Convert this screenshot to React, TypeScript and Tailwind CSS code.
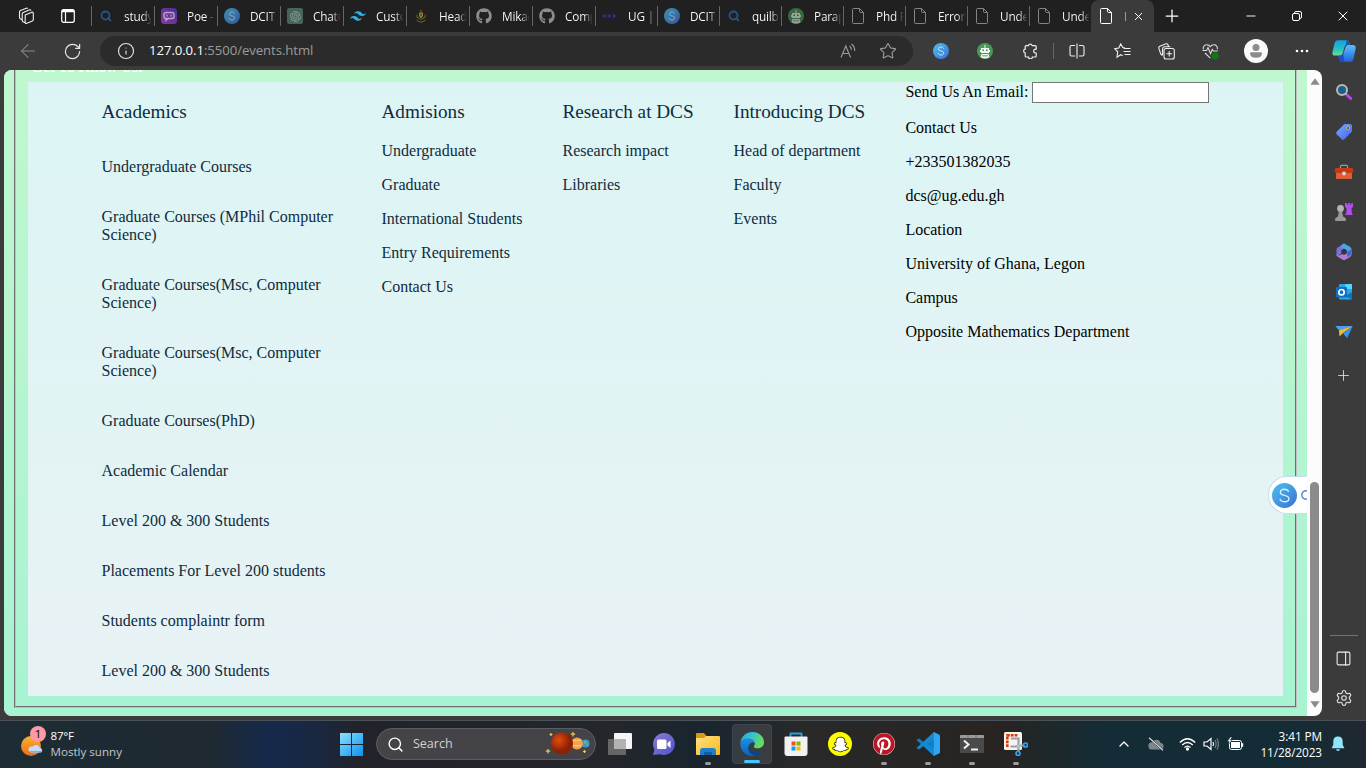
import type { ReactNode } from "react";
import {
  ArrowLeft, RotateCw, Info, Star, X, Plus, Minus, Search,
  Settings, PanelRight, ChevronUp,
} from "lucide-react";
import { FaGithub, FaPinterest, FaSnapchatGhost } from "react-icons/fa";
import { SiTailwindcss } from "react-icons/si";
import { RiOpenaiFill } from "react-icons/ri";

type Kind = "search" | "poe" | "s" | "gpt" | "tw" | "crest" | "gh" | "ug" | "bot" | "file";

const tabs: { kind: Kind; text: string }[] = [
  { kind: "search", text: "study" },
  { kind: "poe", text: "Poe - " },
  { kind: "s", text: "DCIT" },
  { kind: "gpt", text: "ChatG" },
  { kind: "tw", text: "Custo" },
  { kind: "crest", text: "Head" },
  { kind: "gh", text: "Mikae" },
  { kind: "gh", text: "Comp" },
  { kind: "ug", text: "UG |" },
  { kind: "s", text: "DCIT" },
  { kind: "search", text: "quilb" },
  { kind: "bot", text: "Parap" },
  { kind: "file", text: "Phd P" },
  { kind: "file", text: "Error" },
  { kind: "file", text: "Unde" },
  { kind: "file", text: "Unde" },
];

function Page({ className }: { className: string }) {
  return (
    <svg viewBox="0 0 12 16" width="12" height="16" fill="none" stroke="currentColor" className={className}>
      <path d="M1.500.5h6l4 4v10a1 1 0 0 1-1 1h-9a1 1 0 0 1-1-1v-13a1 1 0 0 1 1-1zM7.500.5v3a1 1 0 0 0 1 1h3" />
    </svg>
  );
}

function SBadge({ size }: { size: number }) {
  return (
    <svg viewBox="0 0 24 24" width={size} height={size} className="shrink-0">
      <defs>
        <linearGradient id="sb" x1="0" y1="0" x2="1" y2="1">
          <stop offset="0" stopColor="#4cc3ea" />
          <stop offset="1" stopColor="#3a6fd8" />
        </linearGradient>
      </defs>
      <circle cx="12" cy="12" r="12" fill="url(#sb)" />
      <path d="M16 8.400C15.400 6.800 13.900 6 12 6c-2.300 0-4 1.200-4 3 0 4 8.200 1.900 8.200 6 0 1.900-1.800 3-4.200 3-2.200 0-3.900-.9-4.400-2.700" fill="none" stroke="#dceffc" strokeWidth="1.300" />
    </svg>
  );
}

function Robot() {
  return (
    <svg viewBox="0 0 16 16" width="16" height="16">
      <circle cx="8" cy="8" r="8" fill="#489a58" />
      <path d="M7.500 2h1v3h3.500v5H4V5h3.500zM3 7h1v2H3zm9 0h1v2h-1zM4.500 11h7l1 3.200Q8 17 3.500 14.200z" fill="#f1f7f1" />
      <path d="M5.500 6.500h1.500V8H5.500zm3.500 0h1.500V8H9zM5 12.500h6v.8H5z" fill="#3d7f4b" />
    </svg>
  );
}

function TabIcon({ kind }: { kind: Kind }) {
  switch (kind) {
    case "search":
      return <Search size={12} strokeWidth={3.600} className="text-[#205689]" />;
    case "poe":
      return (
        <svg viewBox="0 0 16 16" width="16" height="16">
          <defs><linearGradient id="poe" x1="0" x2="1" y1="1" y2="0"><stop stopColor="#8b35a8" /><stop offset="1" stopColor="#4b2f91" /></linearGradient></defs>
          <rect width="16" height="16" rx="3.500" fill="url(#poe)" />
          <rect x="3" y="4.500" width="10" height="6" rx="2" fill="none" stroke="#b9a5c8" strokeWidth="1.400" />
          <path d="M6 6.500v2M10 6.500v2M5 10.500v2l2-2" stroke="#b9a5c8" strokeWidth="1.200" fill="none" />
        </svg>
      );
    case "s":
      return <span className="flex opacity-70"><SBadge size={16} /></span>;
    case "gpt":
      return (
        <span className="flex size-4 items-center justify-center rounded-[2px] bg-[#45655a] text-[#8d9b95]">
          <RiOpenaiFill size={13} />
        </span>
      );
    case "tw":
      return <SiTailwindcss size={16} className="text-[#33b2e8]" />;
    case "crest":
      return (
        <svg viewBox="0 0 12 16" width="12" height="16">
          <path d="M5.300 1.500h1.400v2.500H5.300z" fill="#9a2d27" />
          <path d="M4 4.500h4v3.500l-2 2.500L4 8z" fill="#9d8125" />
          <path d="M1.500 5l1.500 4 3 2 3-2 1.500-4v4.500l-3 2h-3l-3-2z" fill="#5d5b2c" />
          <path d="M5.200 5.500h1.600v2.500H5.200z" fill="#315a3b" />
          <path d="M1.500 12q4.500 4 9 0" stroke="#77692f" fill="none" />
        </svg>
      );
    case "gh":
      return <FaGithub size={16} className="text-[#8d8d8d]" />;
    case "ug":
      return (
        <svg viewBox="0 0 16 8" width="16" height="8">
          <rect y="1" width="16" height="6" fill="#20203a" />
          <path d="M1 4h3M6 4h3M11 2.500l2 1.500-2 1.500" stroke="#4a4a94" fill="none" />
        </svg>
      );
    case "bot":
      return <span className="flex opacity-60"><Robot /></span>;
    default:
      return <Page className="text-[#858585]" />;
  }
}

function TabStrip() {
  return (
    <header className="flex h-8 shrink-0 bg-[#202020] text-white">
      <div className="flex w-[91px] shrink-0 items-center pl-[17px]">
        <svg viewBox="0 0 18 18" width="18" height="18" fill="none" stroke="#f0f0f0" strokeWidth="1.100" className="mr-[26px]">
          <path d="M8.200 8 14.800 5.200q1.200-.4 1.500.8v6.500q0 1-1 1.500l-6 2.500q-1.100.3-1.100-1zM8.200 15.800 6 14.800q-.8-.5-.8-1.500V7q0-1 1-1.500l6.500-2.700q1-.2 1.300.8M5.500 13 3.300 11.800q-.8-.5-.8-1.500V5q0-1 1-1.500L9.300 1.200q1-.2 1.300.6" />
        </svg>
        <svg viewBox="0 0 14 14" width="14" height="14" fill="none" stroke="#fff" strokeWidth="1.200">
          <rect x=".7" y=".7" width="12.600" height="12.600" rx="2" />
          <path d="M1 2h12" strokeWidth="2.500" /><path d="M4.500 3v10" />
        </svg>
      </div>
      {tabs.map((t, i) => (
        <div key={i} className={`flex min-w-0 shrink-0 items-center ${i < 8 ? "w-[63px]" : "w-[62px]"}`}>
          <div className="h-5 w-px shrink-0 bg-[#666]" />
          <div className="flex w-[28px] shrink-0 items-center justify-center">
            <TabIcon kind={t.kind} />
          </div>
          <div className="ml-[4px] w-[27px] overflow-hidden bg-linear-to-r from-white from-70% to-[#303030] bg-clip-text text-[11.800px] leading-5 tracking-[-0.200px] whitespace-nowrap text-transparent">
            {t.text}
          </div>
        </div>
      ))}
      <div className="flex w-[63px] shrink-0 items-center rounded-t-lg bg-[#3b3b3b] pl-[9px]">
        <Page className="text-white" />
        <div className="ml-[13px] h-[9px] w-px bg-[#9a9a9a]" />
        <X size={13} strokeWidth={1.800} className="ml-[6px]" />
      </div>
      <div className="flex flex-1 items-center pl-[8px]">
        <Plus size={20} strokeWidth={1.500} />
        <Minus size={14} strokeWidth={1.600} className="ml-[62px]" />
        <svg viewBox="0 0 10 10" width="10" height="10" fill="none" stroke="#fff" className="ml-[34px]">
          <rect x=".5" y="2.500" width="7" height="7" rx="1.500" />
          <path d="M2.500 2.500v-.5Q2.500.5 4 .5h4Q9.500.5 9.500 2v4Q9.500 7.500 8 7.500h-.5" />
        </svg>
        <X size={16} strokeWidth={1.500} className="ml-[33px]" />
      </div>
    </header>
  );
}

function Cell({ w = "w-11", children }: { w?: string; children: ReactNode }) {
  return <div className={`flex shrink-0 items-center justify-center ${w}`}>{children}</div>;
}

function Toolbar() {
  return (
    <div className="flex h-[38px] shrink-0 items-center bg-[#3b3b3b] text-[#e6e6e6]">
      <Cell w="w-14"><ArrowLeft size={22} strokeWidth={1.100} className="text-[#8b8b8b]" /></Cell>
      <Cell w="w-8"><RotateCw size={19} strokeWidth={1.500} /></Cell>
      <div className="ml-3 flex h-[30px] w-[813px] shrink-0 items-center rounded-full bg-[#2b2b2b] pl-[17px]">
        <Info size={18} strokeWidth={1.500} />
        <span className="ml-[14px] flex-1 text-[13.200px] tracking-[-0.080px] text-[#9b9b9b]">
          <span className="text-white">127.0.0.1</span>:5500/events.html
        </span>
        <svg viewBox="0 0 16 16" width="16" height="16" fill="none" stroke="#9b9b9b" strokeWidth="1.100" className="mr-[23px]">
          <path d="M1 14.500 5.800 3l4.800 11.500M2.700 10.500h6.200M9.500 3q2 1.500 1.800 4M11.500 1q3.500 2.800 3.200 7" />
        </svg>
        <Star size={18} strokeWidth={1.500} className="mr-4 text-[#9b9b9b]" />
      </div>
      <div className="ml-[6px] flex">
        <Cell><SBadge size={16} /></Cell>
        <Cell><Robot /></Cell>
        <Cell w="w-[45px]">
          <svg viewBox="0 0 16 16" width="16" height="16" fill="none" stroke="#f0f0f0" strokeWidth="1.200">
            <path d="M4.200 2.600h2.200a2 2 0 0 1 3.800 0h3q1 0 1 1v2.600h-.6a1.900 1.900 0 0 0 0 3.800h.6v3q0 1-1 1h-2.800a1.900 1.900 0 0 1-3.900 0H4.200q-1 0-1-1v-3a2 2 0 0 1 0-3.900V3.600q0-1 1-1z" />
          </svg>
        </Cell>
      </div>
      <div className="ml-px h-4 w-px bg-[#676767]" />
      <Cell w="w-[46px]">
        <svg viewBox="0 0 16 16" width="16" height="16" fill="none" stroke="#f0f0f0" strokeWidth="1.100">
          <path d="M6 2.500H2.500q-1.500 0-1.500 1.500v7.500Q1 13 2.500 13H6M10 2.500h3.500Q15 2.500 15 4v7.500q0 1.500-1.500 1.500H10M8 .5v15" />
        </svg>
      </Cell>
      <Cell>
        <svg viewBox="0 0 17 16" width="17" height="16" fill="none" stroke="#f0f0f0" strokeWidth="1.100">
          <path d="M11 4.800 8.800 4.600 6.700.9 4.800 5 .7 5.700l3 3.100-.7 5.400 3.700-2.500 2 1M9.500 5.500h7M9.500 8.500h7M10.500 11.500h6" />
        </svg>
      </Cell>
      <Cell>
        <svg viewBox="0 0 17 17" width="17" height="17" fill="none" stroke="#f0f0f0" strokeWidth="1.100">
          <rect x="6" y="5.500" width="10.300" height="10.500" rx="2" />
          <path d="M11.200 8v5.500M8.500 10.800h5.500M4.500 12.500 2.800 11.200.8 5.200q-.3-1.500 1-2L8 .8q1.500-.3 2 1l.5 1.700M4.500 12V6q.2-2 2-2.200h6" />
        </svg>
      </Cell>
      <Cell>
        <svg viewBox="0 0 17 17" width="17" height="17" fill="none" stroke="#dcdcdc" strokeWidth="1.100">
          <path d="M1.300 6.500Q.8 2.500 4.300 1.800q2.500-.3 4 1.800 1.500-2.100 4-1.800 3.400.7 3.100 4.500M.5 7.500h4l1.500-3 2.500 6 1.800-4 1 1.500h4.500M3 10l5.300 5.200" />
          <circle cx="13" cy="13" r="3.600" fill="#0d7a12" stroke="none" />
        </svg>
      </Cell>
      <Cell w="w-12">
        <svg viewBox="0 0 24 24" width="24" height="24">
          <circle cx="12" cy="12" r="12" fill="#fafafa" />
          <circle cx="12" cy="8.600" r="3.500" fill="#8c8c8c" />
          <path d="M6 14.500q0-1.200 1.200-1.200h9.600q1.200 0 1.200 1.200 0 4.200-6 4.200t-6-4.200z" fill="#8c8c8c" />
        </svg>
      </Cell>
      <Cell>
        <svg viewBox="0 0 14 4" width="14" height="4" fill="#fff"><circle cx="2" cy="2" r="1.300" /><circle cx="7" cy="2" r="1.300" /><circle cx="12" cy="2" r="1.300" /></svg>
      </Cell>
      <Cell w="w-10">
        <svg viewBox="0 0 24 22" width="24" height="22">
          <defs>
            <linearGradient id="cpa" x1="0" y1="0" x2="0" y2="1"><stop stopColor="#189fe0" /><stop offset=".6" stopColor="#26c3c0" /><stop offset="1" stopColor="#6ddf8c" /></linearGradient>
            <linearGradient id="cpb" x1="0" y1="0" x2="0" y2="1"><stop stopColor="#58c0fb" /><stop offset="1" stopColor="#2264dd" /></linearGradient>
          </defs>
          <path d="M5.500.3h9q2 0 2.700 2l.6 2.400h-2.600q-2 0-2.700 2L10.800 13q-.8 2.600-3.300 2.600H2.800Q0 15.600.4 12.500L2.600 3Q3.300.3 5.500.3z" fill="url(#cpa)" />
          <path d="M18.500 21.700h-8.700q-2 0-2.600-2l-.8-3.600h2q2.300 0 3-2.300l2-6.500q.7-2.300 3-2.300h4.500q3.200 0 2.800 3.600l-2.200 10.200q-.6 2.900-3 2.900z" fill="url(#cpb)" />
          <path d="M6.400 16.100h2q2.200 0 2.800-2l1.400 7.600H9.800q-2 0-2.600-2z" fill="#1b4fd0" />
          <path d="M14.500.3q2 0 2.700 2l.8 2.700h-2.400q-1.200 0-1.900.8z" fill="#1457b8" />
        </svg>
      </Cell>
    </div>
  );
}

const academics = [
  "Undergraduate Courses", "Graduate Courses (MPhil Computer Science)", "Graduate Courses(Msc, Computer Science)",
  "Graduate Courses(Msc, Computer Science)", "Graduate Courses(PhD)", "Academic Calendar", "Level 200 & 300 Students",
  "Placements For Level 200 students", "Students complaintr form", "Level 200 & 300 Students",
];

function Column({ title, links, w }: { title: string; links: string[]; w: string }) {
  return (
    <section className={`shrink-0 pt-[19px] ${w}`}>
      <h3 className="text-[19.200px] leading-[22px]">{title}</h3>
      <ul className="mt-[19px] flex flex-col gap-4">
        {links.map((l) => <li key={l}>{l}</li>)}
      </ul>
    </section>
  );
}

function WebPage() {
  return (
    <main className="relative flex w-[1318px] shrink-0 overflow-hidden rounded-lg bg-[#fcfcfc]">
      <div className="flex w-[1303px] shrink-0 flex-col bg-linear-to-b from-[#c0f7cf] to-[#a7f3d2] font-['Liberation_Serif',serif] text-[16px] leading-[18px]">
        <div className="mr-[10px] mb-[8px] ml-[10px] flex flex-1 flex-col border-x-2 border-t-0 border-b-2 border-[#c6bcc4] pr-3 pb-[10px] pl-3 [border-style:groove]">
          <div className="h-3 overflow-hidden">
            <p className="-mt-[12px] pl-[3px] text-[15.500px] leading-[18px] font-bold tracking-[-0.150px] text-white">Get To Know Us!</p>
          </div>
          <div className="flex flex-1 bg-linear-to-b from-[#dcf5f4] to-[#e8f2f5] pl-[73.500px] text-[#0f2b3d]">
            <section className="w-[280px] shrink-0 pt-[19px]">
              <h3 className="text-[19.200px] leading-[22px]">Academics</h3>
              <ul className="mt-[35px] flex w-[240px] flex-col gap-8">
                {academics.map((l, i) => <li key={i}>{l}</li>)}
              </ul>
            </section>
            <Column w="w-[181px]" title="Admisions" links={["Undergraduate", "Graduate", "International Students", "Entry Requirements", "Contact Us"]} />
            <Column w="w-[171px]" title="Research at DCS" links={["Research impact", "Libraries"]} />
            <Column w="w-[171.900px]" title="Introducing DCS" links={["Head of department", "Faculty", "Events"]} />
            <address className="flex flex-1 flex-col gap-4 text-black not-italic">
              <label className="flex h-[21px] items-start gap-[3.600px]">
                <span className="pt-px">Send Us An Email:</span>
                <input className="h-[21px] w-[177px] border border-[#767676] bg-white" />
              </label>
              {["Contact Us", "+233501382035", "dcs@ug.edu.gh", "Location", "University of Ghana, Legon", "Campus", "Opposite Mathematics Department"].map((l) => (
                <p key={l}>{l}</p>
              ))}
            </address>
          </div>
        </div>
      </div>
      <div className="flex flex-1 flex-col items-center pt-2 pb-[8px]">
        <svg viewBox="0 0 10 7" width="10" height="7"><path d="M5 .3 9.700 6.700H.3z" fill="#8a8a8a" /></svg>
        <div className="mt-auto h-[211px] w-[9px] rounded-full bg-[#8b8b8b]" />
        <svg viewBox="0 0 10 7" width="10" height="7" className="mt-2"><path d="M5 6.700 9.700.3H.3z" fill="#8a8a8a" /></svg>
      </div>
      <div className="absolute top-[406px] left-[1264px] flex h-[38px] w-[39px] items-center overflow-hidden rounded-l-full border border-r-0 border-[#c5dcf8] bg-white pl-[3px]">
        <SBadge size={25} />
        <svg viewBox="0 0 10 10" width="10" height="10" fill="none" stroke="#4a83d8" strokeWidth="1.400" className="ml-[4px] shrink-0"><circle cx="5" cy="5" r="4.200" /></svg>
      </div>
    </main>
  );
}

function SideBar() {
  const cell = "flex h-10 w-full shrink-0 items-center justify-center";
  return (
    <aside className="flex flex-1 flex-col items-center pt-px pr-px pb-[2px]">
      <div className="flex h-[41px] w-full shrink-0 items-center justify-center">
        <svg viewBox="0 0 18 18" width="18" height="18">
          <path d="M10.500 10.500 13 13" stroke="#aaa" strokeWidth="2" />
          <path d="m12.500 12.500 3.300 3" stroke="#bd43f2" strokeWidth="3" strokeLinecap="round" />
          <circle cx="7" cy="7" r="5" fill="#1b6187" stroke="#b9b9b9" strokeWidth="2" />
        </svg>
      </div>
      <div className={cell}>
        <svg viewBox="0 0 18 18" width="18" height="18">
          <defs><linearGradient id="tag" x1="0" y1="0" x2="1" y2="1"><stop stopColor="#72b0fb" /><stop offset="1" stopColor="#4a5df0" /></linearGradient></defs>
          <path d="M9.500 1H15q2 0 2 2v5.500L9.300 16.300q-1.300 1-2.600 0L1.700 11.300q-1-1.300 0-2.600z" fill="url(#tag)" />
          <circle cx="13.200" cy="5" r="1.500" fill="#3a3a40" stroke="#e9c021" />
        </svg>
      </div>
      <div className={cell}>
        <svg viewBox="0 0 18 16" width="18" height="16">
          <path d="M5.500 4.500V2.300q0-1 1-1h5q1 0 1 1v2.200" stroke="#9b9b9b" fill="none" strokeWidth="1.200" />
          <rect x="1" y="7" width="16" height="8" rx="1" fill="#e35c38" />
          <rect y="4" width="18" height="5" rx="1" fill="#c43b16" />
          <circle cx="9" cy="9.500" r="1.900" fill="#dadada" />
        </svg>
      </div>
      <div className={cell}>
        <svg viewBox="0 0 18 18" width="18" height="18">
          <path d="M10 0h2v1.500h1.200V0h1.800v1.500h1.200V0H18v4l-1.500 1.200.3 4.800L18 12h-8l1.300-2 .3-4.800L10 4z" fill="#b44cf0" />
          <circle cx="5.500" cy="5.500" r="3.400" fill="#b5b5b5" />
          <path d="M3 8.500h5l-.8 1 .9 4 2.700 1.800V18H.2v-2.700l2.700-1.800.9-4z" fill="#989898" />
        </svg>
      </div>
      <div className={cell}>
        <svg viewBox="0 0 18 18" width="18" height="18">
          <path d="M9.500.5 3 4.200Q1.500 5 1.500 7v6l5-2.500V7.300L12 4z" fill="#7a70dd" />
          <path d="M9 .5 15 3.800q1.500.9 1.500 2.700v5L11.500 9V7L6 4.300Q6 1.500 9 .5z" fill="#4aa5e6" />
          <path d="M16.500 8v3.500q0 1.500-1.400 2.400l-4.800 2.900q-1.300.7-2.600 0l-5-3q-1.200-.8-1.200-2.300 2 1.500 4.300.3l6-3.300z" fill="#b07bd6" />
          <path d="M16.500 6.500v5l-3.800 2.600-1.200-5z" fill="#4566c8" />
          <path d="m9 5.800 2.700 1.500v3L9 12l-2.500-1.500v-3z" fill="#33353f" />
        </svg>
      </div>
      <div className={cell}>
        <svg viewBox="0 0 18 18" width="18" height="18">
          <rect x="4" y="1" width="13" height="15.500" rx="1" fill="#28a8ea" />
          <path d="M10.500 1H16q1 0 1 1v4h-6.500z" fill="#50d9ff" />
          <path d="m17 9-7 4 7 3.500z" fill="#1272bd" />
          <rect x="1" y="4" width="11" height="10.500" rx="1" fill="#0a70c8" />
          <circle cx="6.500" cy="9.200" r="2.700" fill="none" stroke="#fff" strokeWidth="1.700" />
        </svg>
      </div>
      <div className={cell}>
        <svg viewBox="0 0 18 14" width="18" height="14">
          <path d="M.3 1h17.400L4.500 6z" fill="#4a9ff2" /><path d="m17.700 1-5.500 12L8 8.500z" fill="#3595ee" />
          <path d="M4 5.500 17.700 1 8 8l-3.500 3.500z" fill="#f2bd35" />
        </svg>
      </div>
      <div className="flex h-[46px] items-center"><Plus size={17} strokeWidth={1.200} className="text-[#e0e0e0]" /></div>
      <div className="mt-auto mb-[2px] h-px w-7 bg-[#737373]" />
      <div className={cell}><PanelRight size={17} strokeWidth={1.500} className="text-[#f0f0f0]" /></div>
      <div className={cell}><Settings size={18} strokeWidth={1.500} className="text-[#e0e0e0]" /></div>
    </aside>
  );
}

function TaskItem({ children, mark, active }: { children: ReactNode; mark?: boolean; active?: boolean }) {
  return (
    <div className="flex w-11 shrink-0 justify-center">
      <div className={`relative flex h-10 w-10 items-center justify-center rounded ${active ? "border border-white/5 bg-white/10" : ""}`}>
        {children}
        {mark && <span className="absolute -bottom-px h-[3px] w-[6px] rounded-full bg-[#9b9b9b]" />}
        {active && <span className="absolute bottom-0 h-[3px] w-4 rounded-full bg-[#4cc2ff]" />}
      </div>
    </div>
  );
}

function Taskbar() {
  return (
    <footer className="flex h-12 shrink-0 items-center border-t border-[#4b5257] bg-[linear-gradient(90deg,#1d2c34_0px,#1f2932_210px,#152a4c_270px,#1a2740_320px,#22232a_360px,#25262a_600px,#19252f_700px,#29292a_800px,#272421_1000px,#142c35_1100px,#142c36_1290px,#202830_1366px)] pb-px text-white">
      <div className="flex w-[336px] shrink-0 items-center pl-5">
        <div className="relative h-7 w-[26px]">
          <svg viewBox="0 0 26 28" width="26" height="28">
            <defs><linearGradient id="sun" x1="0" y1="0" x2="0" y2="1"><stop stopColor="#f7b42f" /><stop offset="1" stopColor="#ed6d15" /></linearGradient></defs>
            <circle cx="11" cy="16" r="10" fill="url(#sun)" />
            <path d="M11.500 22.500a3 3 0 0 1 0-6h1a4.500 4.500 0 0 1 7.500 1.200 2.500 2.500 0 0 1 .5 4.800z" fill="#c5dcf9" />
            <path d="M9 21q1 1.500 2.500 1.500h9q1.500 0 2-1.500z" fill="#84a9e8" />
          </svg>
          <span className="absolute -top-[4px] left-[10px] flex size-4 items-center justify-center rounded-full bg-[#ff99a4] text-[11.500px] leading-none text-black">1</span>
        </div>
        <div className="ml-[4.500px] text-[11.600px] leading-4">
          <p className="tracking-[-0.200px]">87°F</p>
          <p className="text-[#c3c7ca]">Mostly sunny</p>
        </div>
      </div>
      <div className="flex w-10 pl-1">
        <svg viewBox="0 0 23 23" width="23" height="23">
          <defs><linearGradient id="win" x1="0" y1="0" x2="1" y2="1"><stop stopColor="#8be0fd" /><stop offset="1" stopColor="#0a91f2" /></linearGradient></defs>
          <path d="M0 0h11v11H0zM12 0h11v11H12zM0 12h11v11H0zM12 12h11v11H12z" fill="url(#win)" />
        </svg>
      </div>
      <div className="flex h-8 w-[220px] shrink-0 items-center rounded-full border border-[#5c5c61] bg-[#444448] pl-[10px]">
        <Search size={17} strokeWidth={2} />
        <span className="ml-[9px] flex-1 pt-px text-[12.500px] text-[#d2d2d2]">Search</span>
        <svg viewBox="0 0 46 24" width="46" height="24" className="mr-[4px]">
          <defs>
            <radialGradient id="mars" cx=".35" cy=".35"><stop stopColor="#e24d0d" /><stop offset="1" stopColor="#8d2106" /></radialGradient>
          </defs>
          <circle cx="40.500" cy="11.500" r="4" fill="#3b93dc" /><path d="M38.500 9q3-1.500 3.500 1t-2.500 2zM41 12.500l2.500-.5-1 2.500z" fill="#5bc06b" />
          <circle cx="32" cy="11.500" r="6" fill="#f7a04c" /><path d="M28 8.500q4 1 8-.5M28 13.500q4 1 8 0" stroke="#ffd08c" fill="none" />
          <circle cx="17" cy="11.500" r="11" fill="url(#mars)" />
          <path d="M3 17v4.500M.8 19.200h4.400M28 0v4.500M25.800 2.200h4.400M6 1v3M4.500 2.500h3M39.500 18v3M38 19.500h3" stroke="#f4c44d" strokeWidth="1.200" />
        </svg>
      </div>
      <div className="ml-[2px] flex">
        <TaskItem>
          <svg viewBox="0 0 24 22" width="24" height="22"><rect x="6" y="0" width="18" height="16" rx="1" fill="#f4f4f4" /><rect x="0" y="6" width="18" height="16" rx="1" fill="#6e6e6e" opacity=".9" /><path d="M6 6h12v10H6z" fill="#b2b2b2" /></svg>
        </TaskItem>
        <TaskItem>
          <svg viewBox="0 0 24 24" width="24" height="24">
            <defs><linearGradient id="chat" x1="0" y1="0" x2="1" y2="1"><stop stopColor="#8f78d2" /><stop offset="1" stopColor="#4b55cf" /></linearGradient></defs>
            <path d="M12 1a11 11 0 1 1-4 21.300L1 23l1.500-5.500A11 11 0 0 1 12 1z" fill="url(#chat)" />
            <rect x="5" y="7.500" width="9.500" height="9.500" rx="1.500" fill="#fff" /><path d="m15.500 11 3-2.500v7.500l-3-2.500z" fill="#fff" />
          </svg>
        </TaskItem>
        <TaskItem mark>
          <svg viewBox="0 0 24 22" width="24" height="22">
            <defs><linearGradient id="fold" x1="0" y1="0" x2="1" y2="1"><stop stopColor="#ffe082" /><stop offset="1" stopColor="#fbb91d" /></linearGradient></defs>
            <path d="M0 1q0-1 1-1h7l2.500 3H23v5H0z" fill="#d89a12" />
            <path d="M0 5h8l2-2h13q1 0 1 1v17q0 1-1 1H1q-1 0-1-1z" fill="url(#fold)" />
            <path d="M4 22v-4q0-3 3-3h10q3 0 3 3v4z" fill="#1b80ce" /><path d="M8 22v-2q0-1 1-1h6q1 0 1 1v2z" fill="#125c9f" />
          </svg>
        </TaskItem>
        <TaskItem active>
          <svg viewBox="0 0 24 24" width="24" height="24">
            <defs>
              <linearGradient id="eg" x1="0" y1="0" x2="1" y2=".3"><stop stopColor="#29a3df" /><stop offset=".5" stopColor="#35c1d6" /><stop offset="1" stopColor="#66dc59" /></linearGradient>
              <linearGradient id="eb" x1="0" y1="0" x2="0" y2="1"><stop stopColor="#1b8fdf" /><stop offset="1" stopColor="#0f5fb5" /></linearGradient>
            </defs>
            <path d="M.3 11C1.200 4.500 6 0 12.200 0 19 0 24 4.800 24 10.300c0 3.700-2.700 6-6 6-2.800 0-4.600-1-4.200-1.900.3-.6 1-1.200 1-2.600C14.800 9 12 6.800 8.400 6.800 4 6.800 1.200 8.800.3 11z" fill="url(#eg)" />
            <path d="M.2 11.500C1 8.500 4.500 6.700 8.200 6.800c3.200.1 5.800 1.700 6.500 4-3-1.300-6.200 1-6.200 4.200 0 4.300 3.500 8 7.600 8.500-1.200.4-2.700.5-4.100.5C5.500 24 .2 18.700.2 11.500z" fill="url(#eb)" />
            <path d="M9 12.800C7.500 17 10.500 20 15.500 20c2.600 0 4.800-.7 6.700-1.800C20.700 21 18 23.200 15.500 23.500 10 23.500 6.500 17.500 9 12.800z" fill="#0c4688" />
          </svg>
        </TaskItem>
        <TaskItem>
          <svg viewBox="0 0 24 24" width="24" height="24">
            <path d="M6.500 5V1.500h11V5" fill="none" stroke="#1ea5df" strokeWidth="1.800" />
            <path d="M.5 5.500q0-1 1-1h21q1 0 1 1V21q0 3-3 3h-17q-3 0-3-3z" fill="#f1f1f1" />
            <path d="M7.500 9.500h4v4h-4z" fill="#f25022" /><path d="M12.500 9.500h4v4h-4z" fill="#7fba00" /><path d="M7.500 14.500h4v4h-4z" fill="#00a4ef" /><path d="M12.500 14.500h4v4h-4z" fill="#ffb900" />
          </svg>
        </TaskItem>
        <TaskItem>
          <span className="flex size-6 items-center justify-center rounded-full bg-[#fffc00]">
            <FaSnapchatGhost size={15} className="overflow-visible text-white [stroke:#111] [stroke-width:50px] [paint-order:stroke]" />
          </span>
        </TaskItem>
        <TaskItem mark><span className="flex rounded-full bg-white"><FaPinterest size={22} className="text-[#bd1725]" /></span></TaskItem>
        <TaskItem mark>
          <svg viewBox="0 0 24 24" width="24" height="24">
            <path d="M18 0 7.500 10 3 6.500.7 7.700v.6L18 24z" fill="#147cc5" />
            <path d="M18 24 7.500 14 3 17.500.7 16.300v-.6L18 0v7l-6.500 5 6.500 5z" fill="#1588d2" />
            <path d="m17.800 0 5.200 2.500q1 .5 1 1.500v16q0 1-1 1.500L17.800 24z" fill="#31a5ee" />
          </svg>
        </TaskItem>
        <TaskItem mark>
          <svg viewBox="0 0 24 20" width="24" height="20"><rect y="1" width="24" height="18" rx="1" fill="#4a4a4a" /><path d="M0 2q0-1 1-1h22q1 0 1 1v2H0z" fill="#999" /><path d="M8 1v3M16 1v3" stroke="#777" /><path d="m4 6.500 4.500 4L4 14.500M11 15.500h7" stroke="#f0f0f0" strokeWidth="2" fill="none" /></svg>
        </TaskItem>
        <TaskItem mark>
          <svg viewBox="0 0 24 24" width="24" height="24">
            <rect width="18" height="18" rx="1.500" fill="#f4f4f4" />
            <path d="M3.300 15V3.300H14" stroke="#d83b01" strokeWidth="2.600" strokeDasharray="2.800 1" fill="none" />
            <path d="M7 6.500h7.500V14M6.500 14.500h5l9-1M14.500 8v12" stroke="#999fa7" strokeWidth="2.200" fill="none" />
            <path d="m13 15 4-2" stroke="#bcc1c7" strokeWidth="2" />
            <circle cx="21.500" cy="13" r="2" fill="none" stroke="#33a3ef" strokeWidth="1.700" /><circle cx="14" cy="21.500" r="2" fill="none" stroke="#33a3ef" strokeWidth="1.700" />
          </svg>
        </TaskItem>
      </div>
      <div className="flex flex-1 items-center justify-end pr-[21px]">
        <ChevronUp size={16} strokeWidth={2} className="mr-[16px]" />
        <svg viewBox="0 0 16 14" width="16" height="14" className="mr-[15px]">
          <path d="M4 12.500a3.600 3.600 0 0 1 0-7.200A4.600 4.600 0 0 1 12.600 6 3.300 3.300 0 0 1 13 12.500z" fill="#7d898e" />
          <path d="m1 .8 14 12.500" stroke="#142c35" strokeWidth="2" /><path d="m1 .8 14 12.500" stroke="#d8dddf" strokeWidth="1.200" />
        </svg>
        <svg viewBox="0 0 17 14" width="17" height="14" fill="none" stroke="#fff" strokeWidth="1.300" className="mr-[7px]">
          <path d="M.8 5.500Q8.500-2 16.200 5.500M3.200 8Q8.500 3 13.800 8M5.500 10.500q3-2.700 6 0" /><circle cx="8.500" cy="12" r="1" fill="#fff" />
        </svg>
        <svg viewBox="0 0 16 14" width="16" height="14" fill="none" stroke="#fff" strokeWidth="1.200" className="mr-[8px]">
          <path d="M1 5h3l4-3.500v11L4 9H1zM10 5q1.200 2 0 4" /><path d="M12 3q2.300 4 0 8M14 1.500q3 5.500 0 11" stroke="#718087" />
        </svg>
        <svg viewBox="0 0 17 14" width="17" height="14" className="mr-[16px]">
          <rect x="2.500" y="3.500" width="12" height="9" rx="2" fill="none" stroke="#fff" />
          <path d="M4 5h9v6H4zM15 6.200h1.200v3.600H15z" fill="#fff" />
          <path d="M3.500 0 .3 4.500h2L1.500 7.500l3.500-4.200H3.300L5 0z" fill="#fff" stroke="#142c35" strokeWidth=".4" />
        </svg>
        <div className="flex w-[62px] flex-col items-end text-[11.800px] leading-4 tracking-[-0.100px] whitespace-nowrap">
          <p>3:41 PM</p>
          <p>11/28/2023</p>
        </div>
        <svg viewBox="0 0 14 16" width="14" height="16" className="ml-[9px]">
          <path d="M7 .5q4.700 0 4.700 5v3.300l1.700 3.400H.6l1.700-3.400V5.500q0-5 4.700-5zM5 13.200h4q-.3 1.800-2 1.800t-2-1.800z" fill="#8fe6ff" />
        </svg>
      </div>
    </footer>
  );
}

export default function App() {
  return (
    <div className="flex h-[768px] w-[1366px] flex-col overflow-hidden bg-[#3b3b3b] font-['Open_Sans','Noto_Sans',sans-serif]">
      <TabStrip />
      <Toolbar />
      <div className="flex h-[650px] shrink-0 pl-1">
        <div className="flex h-[646px]"><WebPage /></div>
        <SideBar />
      </div>
      <Taskbar />
    </div>
  );
}
